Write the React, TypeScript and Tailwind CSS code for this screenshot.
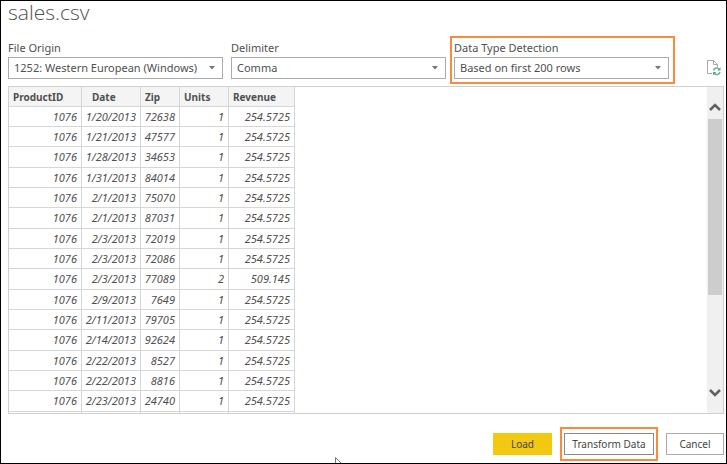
import type { ReactNode } from "react";

type Row = [string, string, string, string, string];

const rows: Row[] = [
  ["1076", "1/20/2013", "72638", "1", "254.5725"],
  ["1076", "1/21/2013", "47577", "1", "254.5725"],
  ["1076", "1/28/2013", "34653", "1", "254.5725"],
  ["1076", "1/31/2013", "84014", "1", "254.5725"],
  ["1076", "2/1/2013", "75070", "1", "254.5725"],
  ["1076", "2/1/2013", "87031", "1", "254.5725"],
  ["1076", "2/3/2013", "72019", "1", "254.5725"],
  ["1076", "2/3/2013", "72086", "1", "254.5725"],
  ["1076", "2/3/2013", "77089", "2", "509.145"],
  ["1076", "2/9/2013", "7649", "1", "254.5725"],
  ["1076", "2/11/2013", "79705", "1", "254.5725"],
  ["1076", "2/14/2013", "92624", "1", "254.5725"],
  ["1076", "2/22/2013", "8527", "1", "254.5725"],
  ["1076", "2/22/2013", "8816", "1", "254.5725"],
  ["1076", "2/23/2013", "24740", "1", "254.5725"],
];

const headers = [
  { name: "ProductID", className: "w-[73px] pl-1 text-left" },
  { name: "Date", className: "w-[59px] pl-2.5 text-left" },
  { name: "Zip", className: "w-[39px] pl-1 text-left" },
  { name: "Units", className: "w-[49px] pl-1 text-left" },
  { name: "Revenue", className: "w-[66px] pl-1 text-left" },
];

function SelectField({ id, label, value }: { id: string; label: string; value: string }) {
  return (
    <div className="w-[215px]">
      <label htmlFor={id} className="block h-[17px] text-[11px] leading-4 text-[#505050]">
        {label}
      </label>
      <div className="relative">
        <select
          id={id}
          className="block h-[22px] w-full appearance-none border border-[#ababab] bg-white pl-[5px] text-[11px] leading-5 text-[#505050]"
        >
          <option>{value}</option>
        </select>
        <svg viewBox="0 0 6 4" className="pointer-events-none absolute top-[9px] right-2 h-1 w-1.5" fill="#777">
          <path d="M0 0h6L3 3.5z" />
        </svg>
      </div>
    </div>
  );
}

function Button({ className, children }: { className: string; children: ReactNode }) {
  return (
    <button type="button" className={`h-[22px] text-[10px] leading-5 text-[#444] ${className}`}>
      {children}
    </button>
  );
}

function RefreshFileIcon() {
  return (
    <svg viewBox="0 0 14 16" className="h-4 w-3.5" fill="none">
      <path d="M5 13.5H.5V.5h6l4 4V7M6.500.5v4h4" stroke="#a8a8a8" />
      <path d="M6.500 10.500C7 8 10.500 7 12.300 9.300M13 12c-.6 2.600-4 3.400-5.800 1.200" stroke="#6fb095" strokeWidth="1.500" />
      <path d="M13.500 7.300v3.200h-3.200zM6 15.300v-3.400h3.400z" fill="#5aa585" />
    </svg>
  );
}

function Chevron({ d }: { d: string }) {
  return (
    <svg viewBox="0 0 12 8" className="h-2 w-3" fill="none" stroke="#606060" strokeWidth="2.500">
      <path d={d} />
    </svg>
  );
}

export default function App() {
  return (
    <main className="relative flex h-screen flex-col overflow-hidden border border-black bg-white pr-0.5 pl-[7px] font-['Noto_Sans','Open_Sans',sans-serif] text-[#505050]">
      <h1 className="h-[35px] font-['Open_Sans','Noto_Sans',sans-serif] text-[21px] leading-[22px] font-light">sales.csv</h1>

      <div className="flex items-start">
        <div className="flex gap-2 pt-1">
          <SelectField id="origin" label="File Origin" value="1252: Western European (Windows)" />
          <SelectField id="delimiter" label="Delimiter" value="Comma" />
        </div>
        <div className="ml-1 border-2 border-[#fb8a3c] pt-0.5 pr-1 pb-[3px] pl-0.5">
          <SelectField id="detection" label="Data Type Detection" value="Based on first 200 rows" />
        </div>
        <button type="button" aria-label="Refresh" className="mt-6 mr-[3px] ml-auto">
          <RefreshFileIcon />
        </button>
      </div>

      <section className="mt-0.5 flex min-h-0 flex-1 items-start justify-between overflow-hidden border border-[#d0d0d0]">
        <table className="-mt-px -ml-px w-[287px] table-fixed border-collapse leading-4">
          <thead>
            <tr className="h-5 bg-[#f4f4f4] text-[10px]">
              {headers.map((h) => (
                <th key={h.name} scope="col" className={`border border-[#d6d6d6] p-0 font-bold ${h.className}`}>
                  {h.name}
                </th>
              ))}
            </tr>
          </thead>
          <tbody className="text-right text-[11px] italic">
            {rows.map((row, r) => (
              <tr key={r} className="h-5 nth-[3n]:h-[21px]">
                {row.map((cell, c) => (
                  <td key={c} className="border border-[#d6d6d6] p-0 pr-1">
                    {cell}
                  </td>
                ))}
              </tr>
            ))}
            <tr className="h-5">
              {headers.map((h) => (
                <td key={h.name} className="border border-[#d6d6d6] p-0" />
              ))}
            </tr>
          </tbody>
        </table>
        <div className="flex w-4 flex-col items-center self-stretch bg-[#f0f0f0] py-4">
          <Chevron d="M1 7l5-5 5 5" />
          <div className="mt-2 h-[176px] w-3.5 bg-[#cdcdcd]" />
          <div className="mt-auto">
            <Chevron d="M1 1l5 5 5-5" />
          </div>
        </div>
      </section>

      <footer className="flex h-[49px] items-start justify-end pt-[13px]">
        <Button className="mt-1.5 w-[59px] bg-[#f2c811]">Load</Button>
        <div className="mr-2 ml-2 border-2 border-[#fb8a3c] px-0.5 py-1">
          <Button className="block w-[90px] border border-[#8a8a8a] bg-white">Transform Data</Button>
        </div>
        <Button className="mt-1.5 w-[58px] border border-[#ababab] bg-white">Cancel</Button>
      </footer>

      <svg viewBox="0 0 6 6" className="absolute bottom-0 left-[334px] size-1.5" fill="none" stroke="#777">
        <path d="M.5 6V.5L6 6" />
      </svg>
    </main>
  );
}
